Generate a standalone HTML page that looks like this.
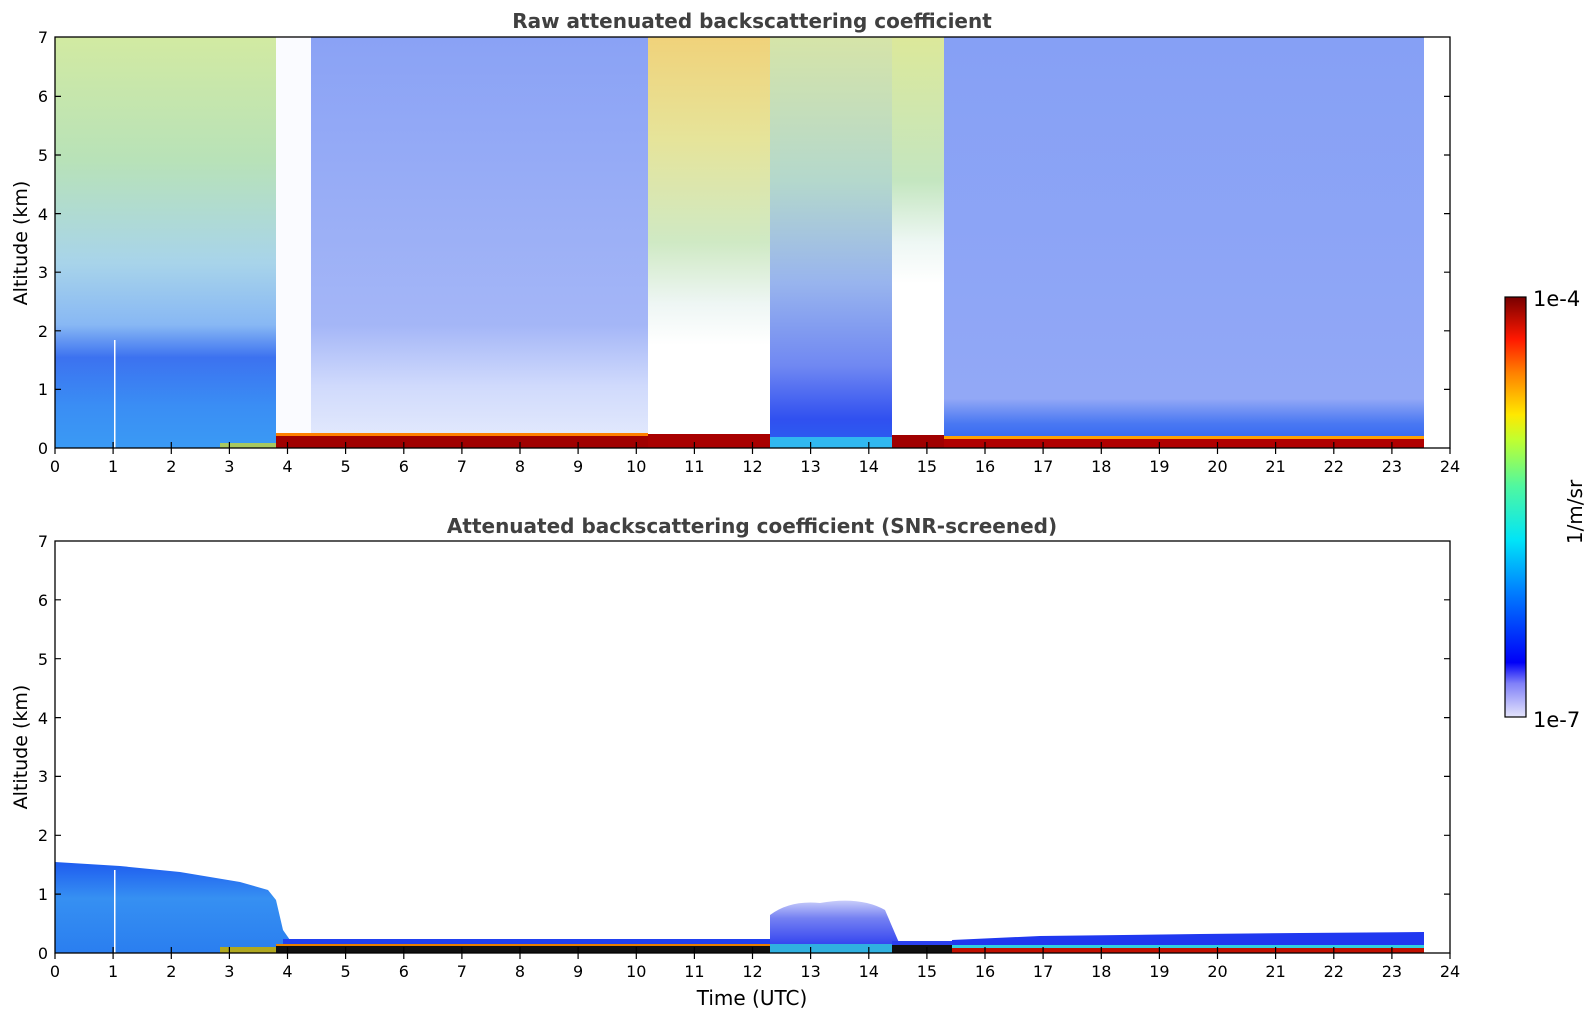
<!DOCTYPE html>
<html><head><meta charset="utf-8"><style>
html,body{margin:0;padding:0;background:#fff;}
svg{display:block;}
text{font-family:"DejaVu Sans","Liberation Sans",sans-serif;}
</style></head><body>
<svg width="1595" height="1020" viewBox="0 0 1595 1020" xmlns="http://www.w3.org/2000/svg">
<defs>
<linearGradient id="gA" x1="0" y1="0" x2="0" y2="1">
<stop offset="0" stop-color="#d2eaa2"/><stop offset="0.3" stop-color="#b8e2b8"/><stop offset="0.55" stop-color="#a8d4ea"/><stop offset="0.7" stop-color="#88b8f4"/><stop offset="0.78" stop-color="#3c72f0"/><stop offset="0.9" stop-color="#3a8ef4"/><stop offset="1" stop-color="#3a9af4"/></linearGradient>
<linearGradient id="gC" x1="0" y1="0" x2="0" y2="1">
<stop offset="0" stop-color="#8aa2f5"/><stop offset="0.7" stop-color="#a4b6f7"/><stop offset="0.85" stop-color="#d0dafc"/><stop offset="1" stop-color="#e6ecfd"/></linearGradient>
<linearGradient id="gD" x1="0" y1="0" x2="0" y2="1">
<stop offset="0" stop-color="#f0d27a"/><stop offset="0.25" stop-color="#e6e49a"/><stop offset="0.5" stop-color="#cfe9c4"/><stop offset="0.65" stop-color="#eef6f4"/><stop offset="0.75" stop-color="#ffffff"/><stop offset="1" stop-color="#ffffff"/></linearGradient>
<linearGradient id="gE" x1="0" y1="0" x2="0" y2="1">
<stop offset="0" stop-color="#d6e4a8"/><stop offset="0.35" stop-color="#b4d8cc"/><stop offset="0.6" stop-color="#98b4ee"/><stop offset="0.8" stop-color="#7088f2"/><stop offset="0.93" stop-color="#3050f0"/><stop offset="1" stop-color="#2a60f0"/></linearGradient>
<linearGradient id="gF" x1="0" y1="0" x2="0" y2="1">
<stop offset="0" stop-color="#dce89a"/><stop offset="0.35" stop-color="#c4e6c0"/><stop offset="0.5" stop-color="#eef7f4"/><stop offset="0.6" stop-color="#ffffff"/></linearGradient>
<linearGradient id="gG" x1="0" y1="0" x2="0" y2="1">
<stop offset="0" stop-color="#86a0f5"/><stop offset="0.88" stop-color="#92a8f6"/><stop offset="0.94" stop-color="#4a78f2"/><stop offset="1" stop-color="#2a60f0"/></linearGradient>
<linearGradient id="gB1" x1="0" y1="0" x2="0" y2="1">
<stop offset="0" stop-color="#1e5cf0"/><stop offset="0.4" stop-color="#3690f2"/><stop offset="1" stop-color="#2a7ef0"/></linearGradient>
<linearGradient id="gB2" x1="0" y1="0" x2="0" y2="1">
<stop offset="0" stop-color="#c8ccfa"/><stop offset="0.4" stop-color="#7480f2"/><stop offset="1" stop-color="#3344f0"/></linearGradient>
<linearGradient id="cb" x1="0" y1="1" x2="0" y2="0">
<stop offset="0" stop-color="#e4e4fb"/><stop offset="0.08" stop-color="#8080f8"/><stop offset="0.13" stop-color="#0000f8"/><stop offset="0.3" stop-color="#0080ff"/><stop offset="0.42" stop-color="#00e4f8"/><stop offset="0.55" stop-color="#50f8a0"/><stop offset="0.66" stop-color="#c0ff30"/><stop offset="0.72" stop-color="#ffe800"/><stop offset="0.82" stop-color="#ff8000"/><stop offset="0.9" stop-color="#ff1800"/><stop offset="1" stop-color="#780000"/></linearGradient>
</defs>

<text x="752" y="28" text-anchor="middle" font-size="20" font-weight="bold" fill="#404040">Raw attenuated backscattering coefficient</text>
<rect x="55" y="37" width="221" height="411" fill="url(#gA)"/>
<rect x="276" y="37" width="35" height="411" fill="#fafbff"/>
<rect x="311" y="37" width="337" height="411" fill="url(#gC)"/>
<rect x="648" y="37" width="122" height="411" fill="url(#gD)"/>
<rect x="770" y="37" width="122" height="411" fill="url(#gE)"/>
<rect x="892" y="37" width="52" height="411" fill="url(#gF)"/>
<rect x="944" y="37" width="480" height="411" fill="url(#gG)"/>
<rect x="114" y="340" width="1.5" height="108" fill="#fff"/>
<rect x="220" y="443" width="56" height="5" fill="#a8c860"/>
<rect x="276" y="435" width="372" height="13" fill="#a00000"/>
<rect x="276" y="433" width="372" height="3" fill="#ff8000"/>
<rect x="648" y="434" width="122" height="14" fill="#a80000"/>
<rect x="770" y="437" width="122" height="11" fill="#30b8f0"/>
<rect x="892" y="435" width="52" height="13" fill="#a00000"/>
<rect x="944" y="438" width="480" height="10" fill="#b00000"/>
<rect x="944" y="436" width="480" height="3" fill="#ffa000"/>
<rect x="55" y="37" width="1395" height="411" fill="none" stroke="#000" stroke-width="1.3"/>
<g stroke="#000" stroke-width="1.2">
<path d="M55 389.4h6M55 330.8h6M55 272.2h6M55 213.6h6M55 155h6M55 96.4h6M1450 389.4h-6M1450 330.8h-6M1450 272.2h-6M1450 213.6h-6M1450 155h-6M1450 96.4h-6"/>
</g>
<g font-size="16" fill="#000" text-anchor="end">
<text x="48" y="454">0</text><text x="48" y="395">1</text><text x="48" y="337">2</text><text x="48" y="278">3</text><text x="48" y="220">4</text><text x="48" y="161">5</text><text x="48" y="102">6</text><text x="48" y="43">7</text>
</g>
<text transform="translate(27 243) rotate(-90)" text-anchor="middle" font-size="19">Altitude (km)</text>

<text x="752" y="533" text-anchor="middle" font-size="20" font-weight="bold" fill="#404040">Attenuated backscattering coefficient (SNR-screened)</text>
<path d="M55 862 L120 866 L180 872 L240 882 L268 890 L276 900 L283 930 L290 940 L290 953 L55 953Z" fill="url(#gB1)"/>
<rect x="114" y="870" width="1.5" height="83" fill="#fff"/>
<rect x="283" y="939" width="487" height="5" fill="#2040f0"/>
<path d="M770 915 Q790 900 820 903 Q860 896 885 910 L900 945 L770 945Z" fill="url(#gB2)"/>
<rect x="892" y="941" width="60" height="4" fill="#2a40f0"/>
<path d="M952 940 L1040 936 L1200 934 L1300 933 L1424 932 L1424 947 L952 947Z" fill="#2038f0"/>
<rect x="952" y="945" width="472" height="3" fill="#30d0e0"/>
<rect x="952" y="948" width="472" height="5" fill="#c01000"/>
<rect x="220" y="947" width="56" height="6" fill="#b0a820"/>
<rect x="276" y="945" width="494" height="8" fill="#101010"/>
<rect x="276" y="944" width="494" height="2" fill="#e88000"/>
<rect x="770" y="944" width="122" height="9" fill="#30b0e0"/>
<rect x="892" y="945" width="60" height="8" fill="#101010"/>
<rect x="55" y="541" width="1395" height="412" fill="none" stroke="#000" stroke-width="1.3"/>
<g stroke="#000" stroke-width="1.2">
<path d="M55 894.1h6M55 835.3h6M55 776.4h6M55 717.6h6M55 658.7h6M55 599.8h6M1450 894.1h-6M1450 835.3h-6M1450 776.4h-6M1450 717.6h-6M1450 658.7h-6M1450 599.8h-6"/>
</g>
<g font-size="16" fill="#000" text-anchor="end">
<text x="48" y="959">0</text><text x="48" y="900">1</text><text x="48" y="841">2</text><text x="48" y="782">3</text><text x="48" y="724">4</text><text x="48" y="665">5</text><text x="48" y="606">6</text><text x="48" y="547">7</text>
</g>
<text transform="translate(27 747) rotate(-90)" text-anchor="middle" font-size="19">Altitude (km)</text>

<g stroke="#000" stroke-width="1.2" id="xt">
<path d="M113.1 448v-6M171.3 448v-6M229.4 448v-6M287.5 448v-6M345.6 448v-6M403.8 448v-6M461.9 448v-6M520 448v-6M578.1 448v-6M636.3 448v-6M694.4 448v-6M752.5 448v-6M810.6 448v-6M868.8 448v-6M926.9 448v-6M985 448v-6M1043.1 448v-6M1101.3 448v-6M1159.4 448v-6M1217.5 448v-6M1275.6 448v-6M1333.8 448v-6M1391.9 448v-6"/>
<path d="M55 448v6M113.1 448v6M171.3 448v6M229.4 448v6M287.5 448v6M345.6 448v6M403.8 448v6M461.9 448v6M520 448v6M578.1 448v6M636.3 448v6M694.4 448v6M752.5 448v6M810.6 448v6M868.8 448v6M926.9 448v6M985 448v6M1043.1 448v6M1101.3 448v6M1159.4 448v6M1217.5 448v6M1275.6 448v6M1333.8 448v6M1391.9 448v6M1450 448v6"/>
</g>
<use href="#xt" transform="translate(0 505)"/>
<g font-size="16" fill="#000" text-anchor="middle" id="xl">
<text x="55" y="472">0</text><text x="113.1" y="472">1</text><text x="171.3" y="472">2</text><text x="229.4" y="472">3</text><text x="287.5" y="472">4</text><text x="345.6" y="472">5</text><text x="403.8" y="472">6</text><text x="461.9" y="472">7</text><text x="520" y="472">8</text><text x="578.1" y="472">9</text><text x="636.3" y="472">10</text><text x="694.4" y="472">11</text><text x="752.5" y="472">12</text><text x="810.6" y="472">13</text><text x="868.8" y="472">14</text><text x="926.9" y="472">15</text><text x="985" y="472">16</text><text x="1043.1" y="472">17</text><text x="1101.3" y="472">18</text><text x="1159.4" y="472">19</text><text x="1217.5" y="472">20</text><text x="1275.6" y="472">21</text><text x="1333.8" y="472">22</text><text x="1391.9" y="472">23</text><text x="1450" y="472">24</text>
</g>
<use href="#xl" transform="translate(0 505)"/>
<text x="752" y="1005" text-anchor="middle" font-size="20">Time (UTC)</text>

<rect x="1505" y="297" width="21" height="420" fill="url(#cb)" stroke="#000" stroke-width="1.2"/>
<text x="1533" y="306" font-size="21">1e-4</text>
<text x="1533" y="727" font-size="21">1e-7</text>
<text transform="translate(1582 512) rotate(-90)" text-anchor="middle" font-size="20">1/m/sr</text>
</svg>
</body></html>
